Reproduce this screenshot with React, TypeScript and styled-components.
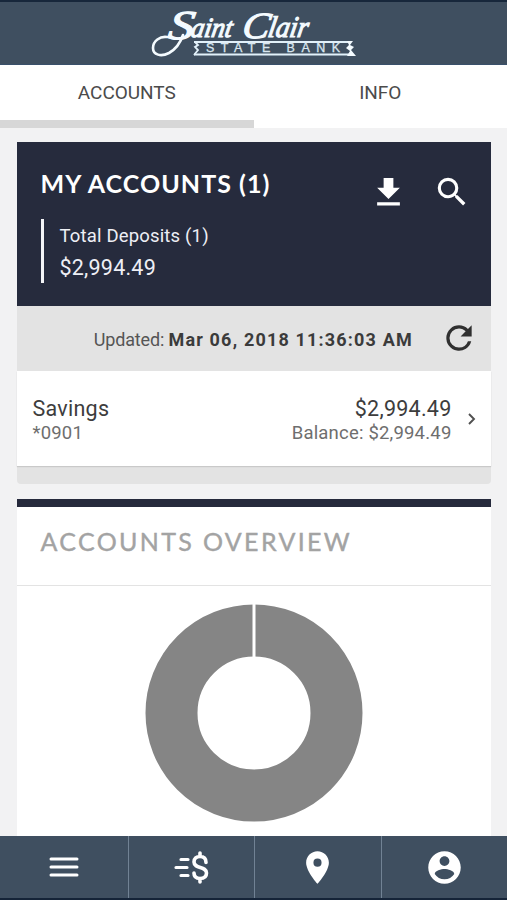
import React from 'react';
import styled, { createGlobalStyle } from 'styled-components';

const GlobalStyle = createGlobalStyle`
  * { box-sizing: border-box; }
  body { margin: 0; background: #f2f2f3; font-family: Roboto, sans-serif; color: #3c3c3c; }
  h1, h2, p { margin: 0; font-weight: 400; }
  button { border: 0; padding: 0; background: none; color: inherit; font: inherit; display: flex; }
  svg { display: block; flex: none; }
`;

const Screen = styled.div`
  width: 507px;
  height: 900px;
  display: flex;
  flex-direction: column;
  overflow: hidden;
  background: #f2f2f3;
`;

const Header = styled.header`
  height: 65px;
  flex: none;
  border-top: 2px solid #17273b;
  border-bottom: 1px solid #39506b;
  background: #3f4f60;
  display: flex;
  justify-content: center;
`;

const Tabs = styled.nav`
  display: flex;
  height: 63px;
  flex: none;
  background: #fff;
`;

const Tab = styled.button<{ $active?: boolean }>`
  flex: 1;
  justify-content: center;
  align-items: flex-start;
  padding-top: 16px;
  font-size: 19px;
  line-height: 24px;
  letter-spacing: -0.05px;
  color: #4b4b4b;
  border-bottom: 8px solid ${p => (p.$active ? '#d7d7d7' : '#fff')};
`;

const Content = styled.main`
  flex: 1;
  min-height: 0;
  overflow: hidden;
  padding: 14px 16px 0 16.5px;
`;

const Card = styled.section`
  width: 474.5px;
  background: #fff;
`;

const AccountsCard = styled(Card)`
  height: 342px;
  border-radius: 0 0 4px 4px;
  background: #e3e3e3;
`;

const Summary = styled.div`
  height: 164px;
  background: #262b3d;
  color: #fff;
  display: flex;
  justify-content: space-between;
  padding: 26px 20.5px 0 24px;
`;

const Title = styled.h1`
  font: 700 25px/30px Lato, sans-serif;
  letter-spacing: 1.05px;
  white-space: nowrap;
`;

const Deposits = styled.div`
  margin-top: 21px;
  height: 64px;
  padding: 2px 0 0 16px;
  border-left: 3px solid #f3f4f7;
  color: #eeeff5;
`;

const DepositLabel = styled.p`
  font-size: 18.5px;
  line-height: 30px;
  letter-spacing: 0.17px;
`;

const DepositTotal = styled.p`
  font-size: 21.5px;
  line-height: 33px;
  letter-spacing: 0.22px;
`;

const Actions = styled.div`
  display: flex;
  gap: 24.5px;
  padding-top: 4.5px;
`;

const Updated = styled.div`
  height: 65px;
  display: flex;
  align-items: center;
  justify-content: flex-end;
  padding: 0 13px 2px 0;
  font-size: 18px;
  line-height: 24px;
  white-space: pre;
`;

const UpdatedText = styled.span`
  margin: 5px 27px 0 0;
  letter-spacing: -0.15px;
  color: #555;

  strong { font-weight: 700; letter-spacing: 1.18px; color: #3b3b3b; }
`;

const AccountRow = styled.div`
  height: 95px;
  display: flex;
  align-items: flex-start;
  padding: 25px 13px 0 16px;
  background: #fff;
  box-shadow: 0 1px 1px #c9c9c9;
`;

const AccountCell = styled.div<{ $end?: boolean }>`
  ${p => p.$end && 'margin-left: auto; text-align: right;'}
`;

const Primary = styled.p`
  font-size: 21.5px;
  line-height: 25px;
  letter-spacing: 0.25px;
  color: #3d3d3d;
`;

const Secondary = styled.p`
  font-size: 18.5px;
  line-height: 24px;
  letter-spacing: 0.2px;
  color: #6e6e6e;
`;

const Chevron = styled.div`
  margin: 16px 0 0 14.5px;
`;

const OverviewCard = styled(Card)`
  margin-top: 15px;
  height: 360px;
  border-top: 8px solid #262a3c;
`;

const OverviewTitle = styled.h2`
  height: 79px;
  padding: 19px 0 0 24px;
  border-bottom: 1px solid #e3e3e3;
  font: 400 25px/30px Lato, sans-serif;
  letter-spacing: 2.35px;
  color: #a3a3a3;
  -webkit-text-stroke: 0.4px #a3a3a3;
`;

const Chart = styled.div`
  display: flex;
  justify-content: center;
  padding-top: 18px;
`;

const BottomNav = styled.nav`
  height: 64px;
  flex: none;
  display: grid;
  grid-template-columns: 128.5px 126.5px 126.5px 1fr;
  background: #3f4f60;
  border-bottom: 2px solid #152438;
`;

const NavItem = styled.button`
  align-items: center;
  justify-content: center;
  color: #fff;
  border-right: 1px solid #718294;

  &:last-child { border-right: 0; }
`;

const Logo = () => (
  <svg width="210" height="60" viewBox="149 2 210 60" fill="#f4fbff" role="img" aria-label="Saint Clair State Bank">
    <g fontFamily="Liberation Serif, serif" fontStyle="italic" fontWeight="400" stroke="#f4fbff" strokeWidth="1.1">
      <text transform="translate(167 39) skewX(-8)" fontSize="41" textLength="26" lengthAdjust="spacingAndGlyphs">S</text>
      <text transform="translate(190 37) skewX(-10)" fontSize="28" textLength="41" lengthAdjust="spacingAndGlyphs">aint</text>
      <text transform="translate(241 38) skewX(-10)" fontSize="37" textLength="27" lengthAdjust="spacingAndGlyphs">C</text>
      <text transform="translate(267 37) skewX(-10)" fontSize="30" textLength="40" lengthAdjust="spacingAndGlyphs">lair</text>
    </g>
    <path d="M167 37c-7-1-14 4-14 11 0 7 8 9 16 5 7-4 11-9 14-18" fill="none" stroke="#f4fbff" strokeWidth="2.6" strokeLinecap="round" />
    <path d="M194 42H350M194 54.500H350" fill="none" stroke="#e2f1fa" strokeWidth="2" />
    <path d="M195 42l3 3-3 2 3 3-4 5" fill="none" stroke="#e2f1fa" strokeWidth="1.8" />
    <path d="M347 41h6l-3 4 4 2-3 3 5 6h-9l3-5-4-3 3-3z" />
    <text x="206" y="52" fontFamily="Liberation Sans, sans-serif" fontSize="12.5" fill="#d9e6ef" stroke="#d9e6ef" strokeWidth=".3" textLength="134">STATE BANK</text>
  </svg>
);

const Icon = ({ size, d, color = 'currentColor' }: { size: number; d: string; color?: string }) => (
  <svg width={size} height={size} viewBox="0 0 24 24" fill={color}><path d={d} /></svg>
);

const DOWNLOAD = 'M19 9h-4V3H9v6H5l7 7 7-7zM5 18v2h14v-2H5z';
const SEARCH = 'M15.5 14h-.79l-.28-.27A6.471 6.471 0 0 0 16 9.5 6.5 6.5 0 1 0 9.5 16c1.61 0 3.09-.59 4.23-1.57l.27.28v.79l5 4.99L20.49 19l-4.99-5zm-6 0C7.01 14 5 11.99 5 9.5S7.01 5 9.5 5 14 7.01 14 9.5 11.99 14 9.5 14z';
const REFRESH = 'M17.65 6.35A7.958 7.958 0 0 0 12 4a8 8 0 1 0 7.73 10h-2.08A5.99 5.99 0 0 1 12 18a6 6 0 1 1 0-12c1.66 0 3.14.69 4.22 1.78L13 11h7V4l-2.35 2.35z';
const PIN = 'M12 2C8.13 2 5 5.13 5 9c0 5.25 7 13 7 13s7-7.75 7-13c0-3.87-3.13-7-7-7zm0 9.5a2.5 2.5 0 0 1 0-5 2.5 2.5 0 0 1 0 5z';
const PERSON = 'M12 2C6.48 2 2 6.48 2 12s4.48 10 10 10 10-4.48 10-10S17.52 2 12 2zm0 3c1.66 0 3 1.34 3 3s-1.34 3-3 3-3-1.34-3-3 1.34-3 3-3zm0 14.2a7.2 7.2 0 0 1-6-3.22c.03-1.99 4-3.08 6-3.08 1.99 0 5.97 1.09 6 3.08a7.2 7.2 0 0 1-6 3.22z';

const MenuIcon = () => (
  <svg width="30" height="22" viewBox="0 0 30 22" stroke="#fff" strokeWidth="3" strokeLinecap="round">
    <path d="M2 3h26M2 11h26M2 19h26" />
  </svg>
);

const PayIcon = () => (
  <svg width="36" height="34" viewBox="0 0 36 34" fill="none" stroke="#fff" strokeWidth="3.6" strokeLinecap="round">
    <path d="M8 9.500h7M3 17.500h11M8 25.500h7" strokeWidth="3.200" />
    <path d="M27 3v3M27 29v3M33 12.500c0-4-2.500-6-6-6s-6 2-6 5.500c0 7 12.500 4 12.500 11 0 3.500-2.500 5.500-6.500 5.500s-6-2-6-5.500" />
  </svg>
);

const Donut = () => (
  <svg width="218" height="218" viewBox="0 0 218 218">
    <circle cx="109" cy="109" r="82.5" fill="none" stroke="#858585" strokeWidth="52" />
    <path d="M109 0v54" stroke="#fff" strokeWidth="3" />
  </svg>
);

export default function App() {
  return (
    <>
      <GlobalStyle />
      <Screen>
        <Header><Logo /></Header>
        <Tabs>
          <Tab $active>ACCOUNTS</Tab>
          <Tab>INFO</Tab>
        </Tabs>
        <Content>
          <AccountsCard>
            <Summary>
              <div>
                <Title>MY ACCOUNTS (1)</Title>
                <Deposits>
                  <DepositLabel>Total Deposits (1)</DepositLabel>
                  <DepositTotal>$2,994.49</DepositTotal>
                </Deposits>
              </div>
              <Actions>
                <button aria-label="Download"><Icon size={39} d={DOWNLOAD} /></button>
                <button aria-label="Search"><Icon size={38} d={SEARCH} /></button>
              </Actions>
            </Summary>
            <Updated>
              <UpdatedText>Updated: <strong>Mar 06, 2018 11:36:03 AM</strong></UpdatedText>
              <button aria-label="Refresh"><Icon size={38} d={REFRESH} color="#303030" /></button>
            </Updated>
            <AccountRow>
              <AccountCell>
                <Primary>Savings</Primary>
                <Secondary>*0901</Secondary>
              </AccountCell>
              <AccountCell $end>
                <Primary>$2,994.49</Primary>
                <Secondary>Balance: $2,994.49</Secondary>
              </AccountCell>
              <Chevron>
                <svg width="12" height="14" viewBox="0 0 12 14" fill="none" stroke="#505050" strokeWidth="1.9">
                  <path d="M3 2l5 5-5 5" />
                </svg>
              </Chevron>
            </AccountRow>
          </AccountsCard>
          <OverviewCard>
            <OverviewTitle>ACCOUNTS OVERVIEW</OverviewTitle>
            <Chart><Donut /></Chart>
          </OverviewCard>
        </Content>
        <BottomNav>
          <NavItem aria-label="Menu"><MenuIcon /></NavItem>
          <NavItem aria-label="Payments"><PayIcon /></NavItem>
          <NavItem aria-label="Locations"><Icon size={39} d={PIN} /></NavItem>
          <NavItem aria-label="Profile"><Icon size={39} d={PERSON} /></NavItem>
        </BottomNav>
      </Screen>
    </>
  );
}
